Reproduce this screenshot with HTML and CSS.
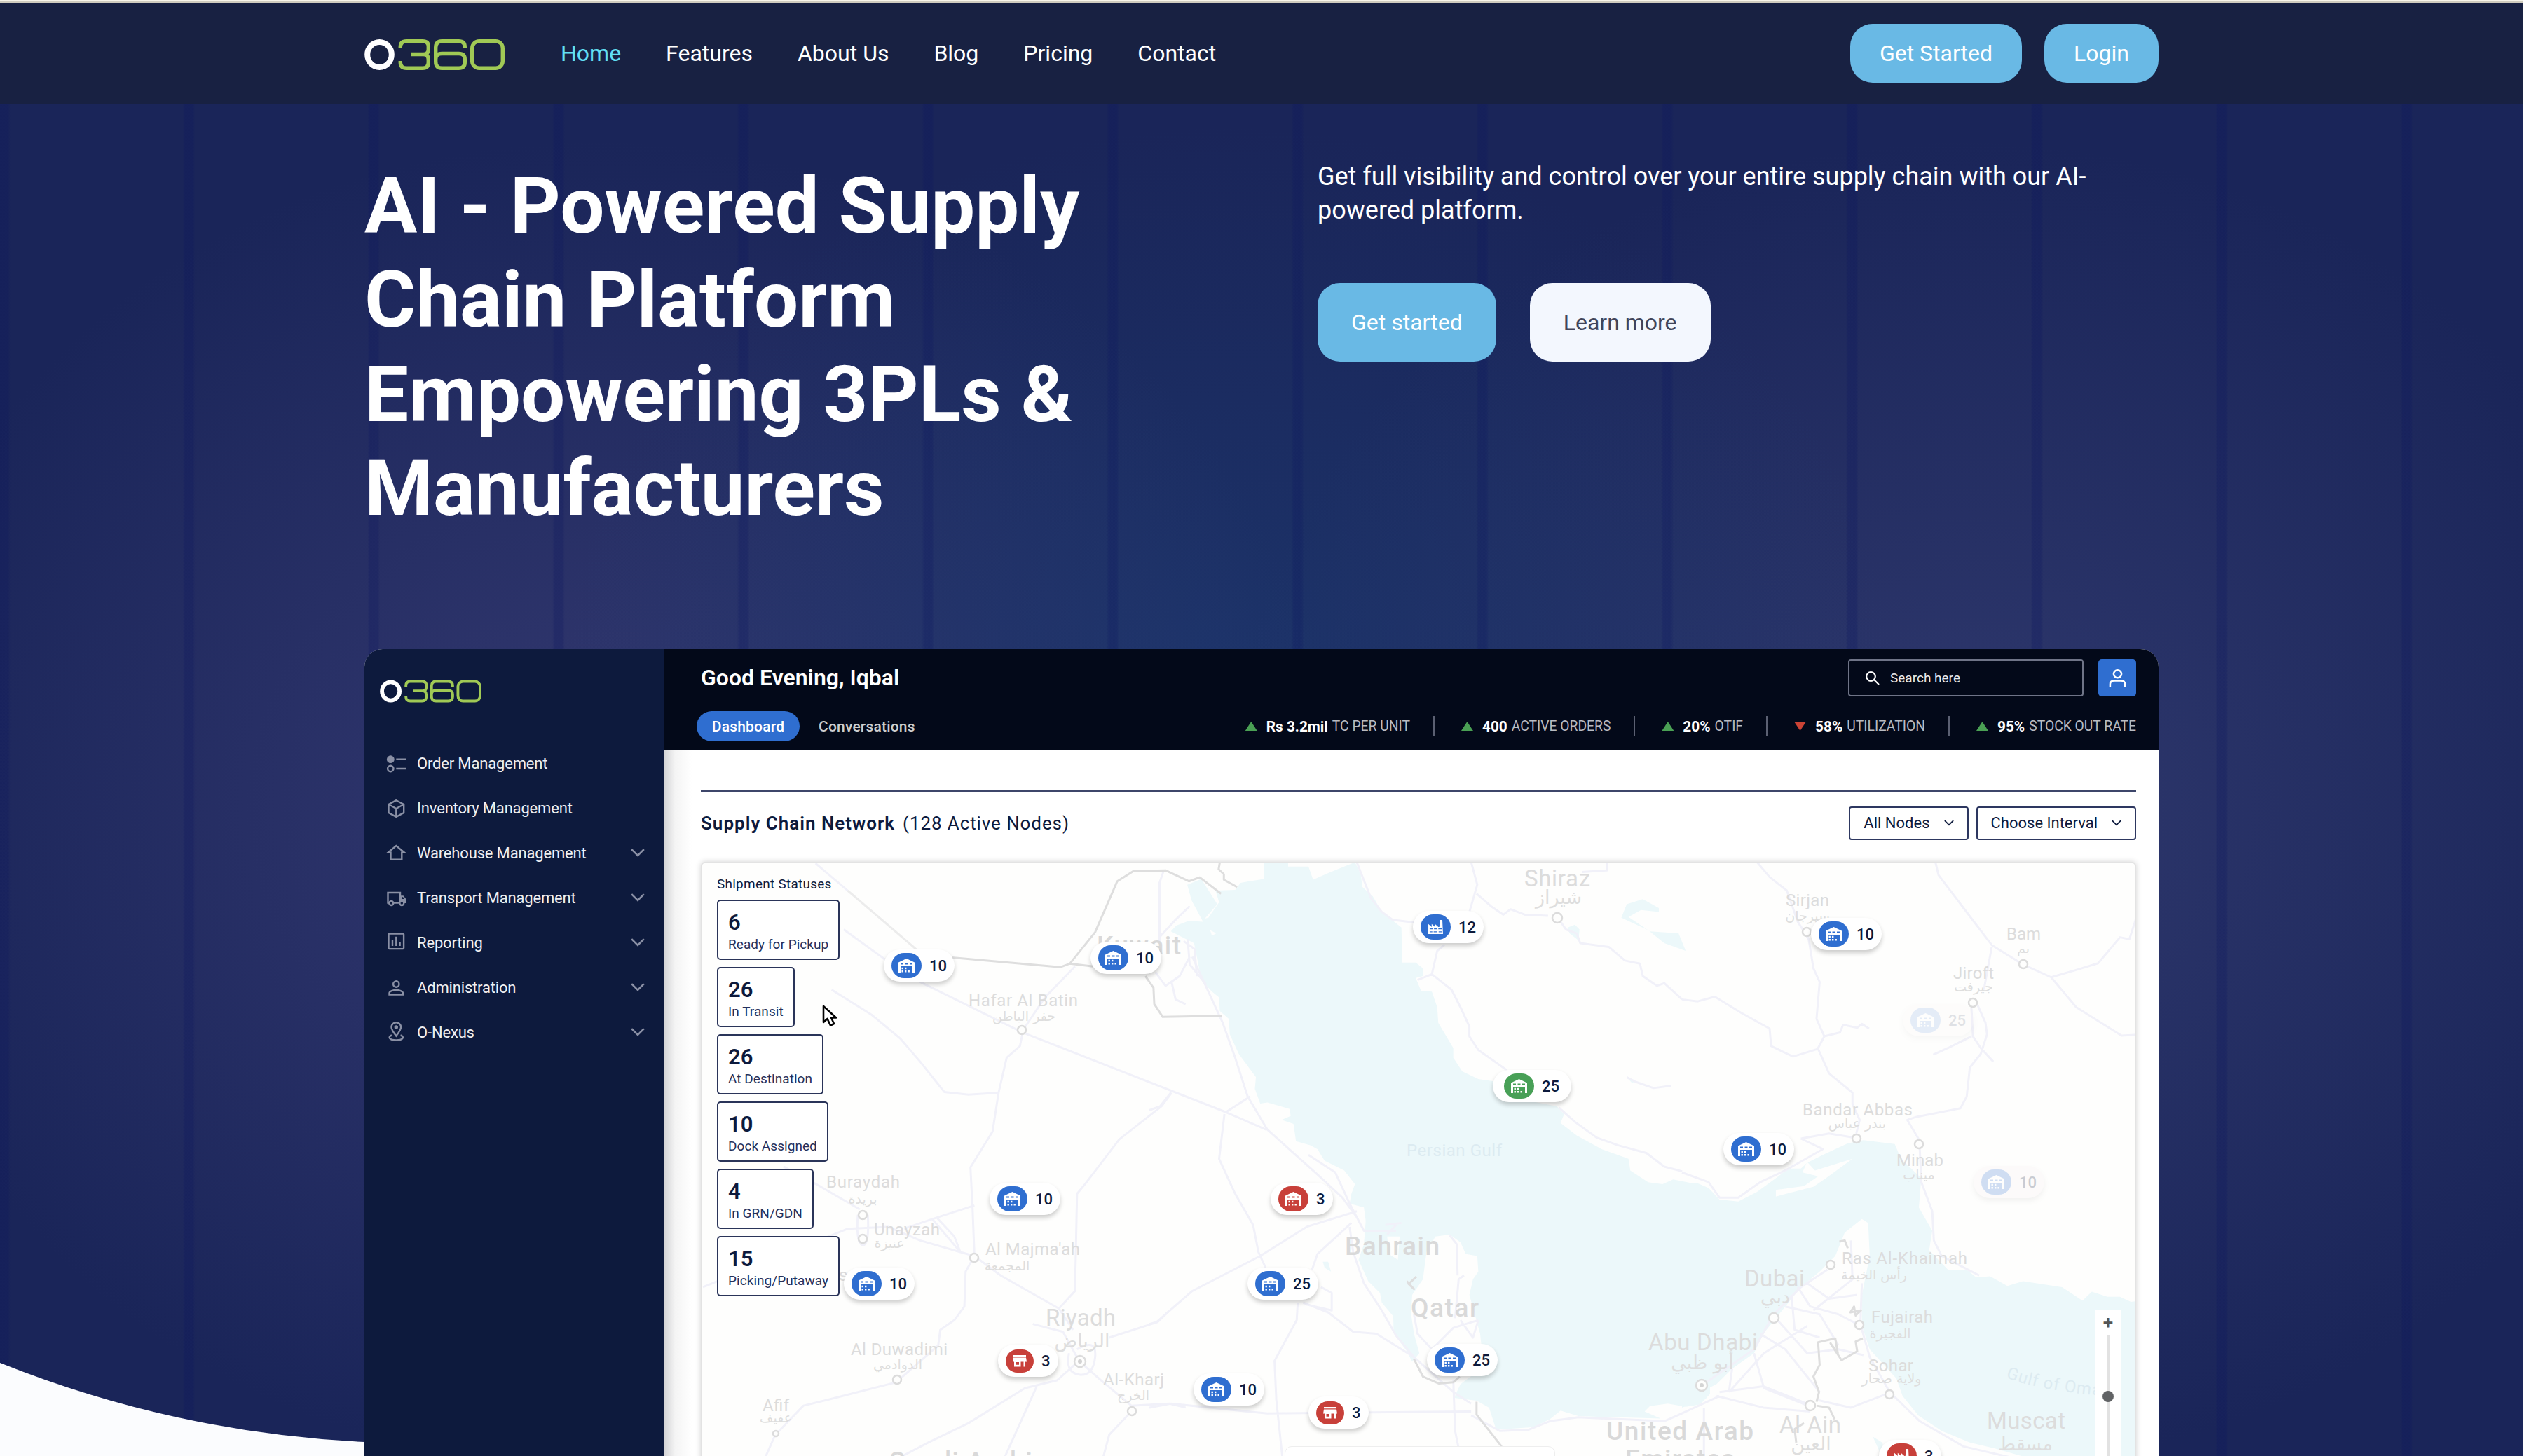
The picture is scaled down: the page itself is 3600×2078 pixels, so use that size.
FILE: index.html
```html
<!DOCTYPE html>
<html lang="en">
<head>
<meta charset="utf-8">
<title>O360 - Supply Chain Platform</title>
<link rel="stylesheet" href="styles.css">
</head>
<body>
<svg class="defs" aria-hidden="true">
  <symbol id="logo" viewBox="0 0 200 44">
    <ellipse cx="21.5" cy="22" rx="17.3" ry="18" fill="none" stroke="#fff" stroke-width="8"/>
    <g fill="none" stroke="#a0c955" stroke-width="5.4">
      <path d="M51.3 13V11Q51.3 2.7 60 2.7H83Q91.3 2.7 91.3 10V14.500Q91.3 21.500 84 21.500H66M84 21.500Q91.3 21.500 91.3 29V33Q91.3 41.300 83 41.300H60Q51.3 41.300 51.3 33V31"/>
      <path d="M143.300 13V11Q143.300 2.700 134.500 2.700H110.500Q101.700 2.700 101.700 12V32Q101.700 41.300 110.500 41.300H134.500Q143.300 41.300 143.300 33V28.500Q143.300 20.500 134.500 20.500H110.500Q101.700 20.500 101.700 28.500"/>
      <rect x="153.700" y="2.700" width="43.600" height="38.600" rx="10"/>
    </g>
  </symbol>
  <symbol id="warehouse" viewBox="0 0 23 20">
    <path fill="#fff" fill-rule="evenodd" d="M0 20V5.500L11.500 0 23 5.500V20H20V11H3V20ZM3 6.500V8.500H7V6.500ZM9.500 6.500V8.500H13.500V6.500ZM16 6.500V8.500H20V6.500Z"/>
    <path fill="#fff" d="M4.500 12.800h2.400v2.400h-2.400zM9 12.800h2.400v2.400h-2.400zM4.500 17h2.400v2.400h-2.400zM9 17h2.400v2.400h-2.400zM13.500 17h2.400v2.400h-2.400z"/>
  </symbol>
  <symbol id="factory" viewBox="0 0 22 21">
    <path fill="#fff" fill-rule="evenodd" d="M0 21V6L5 10.500V6L10 10.500V6L15 10.500H16.500L17.500 0H21L22 21ZM2 12.500V14H6.500V12.500ZM8.500 12.500V14H13V12.500ZM15 12.500V14H20V12.500ZM2 17V18.500H6V17ZM8 17V18.500H13.500V17ZM15.500 17V18.500H20V17Z"/>
  </symbol>
  <symbol id="store" viewBox="0 0 20 17">
    <path fill="#fff" fill-rule="evenodd" d="M1 0H19V2.200H1ZM1 3.500H19L20 9.500H18V16.500H15.500V9.500H11.500V16.500H2V9.500H0ZM4.500 10V13.800H9V10Z"/>
  </symbol>
  <symbol id="chev" viewBox="0 0 20 12"><path d="M1.200 1.200 10 10 18.800 1.200" fill="none" stroke="currentColor" stroke-width="2.600"/></symbol>
</svg>

<div class="page">
  <svg class="backdrop" viewBox="0 0 3600 2078" aria-hidden="true">
    <path d="M0 1862.500H3600" stroke="#fff" stroke-opacity=".16"/>
    <path d="M0 1945Q250 2045 520 2058V2078H0Z" fill="#fbfcfe"/>
  </svg>

  <header class="topbar">
    <div class="wrap topbar-in">
      <svg class="logo" role="img" aria-label="O360"><use href="#logo"/></svg>
      <nav class="nav">
        <a class="on">Home</a><a>Features</a><a>About Us</a><a>Blog</a><a>Pricing</a><a>Contact</a>
      </nav>
      <div class="topbtns"><a class="btn">Get Started</a><a class="btn">Login</a></div>
    </div>
  </header>

  <section class="wrap hero">
    <h1>AI - Powered Supply Chain Platform Empowering 3PLs &amp; Manufacturers</h1>
    <div class="lead">
      <p>Get full visibility and control over your entire supply chain with our AI-powered platform.</p>
      <div class="cta"><a class="btn big">Get started</a><a class="btn big light">Learn more</a></div>
    </div>
  </section>

  <section class="wrap app">
    <aside class="side">
      <svg class="side-logo" role="img" aria-label="O360"><use href="#logo"/></svg>
      <ul class="menu">
        <li><svg class="mi" viewBox="0 0 32 32"><circle cx="8.300" cy="10.700" r="5.400" fill="currentColor" stroke="none"/><circle cx="8.300" cy="24" r="4.200"/><path d="M16.300 10.700H30M16.300 24H30"/></svg><span>Order Management</span></li>
        <li><svg class="mi" viewBox="0 0 32 32"><path d="M16.300 5.200 27.200 11V23L16.300 28.800 5.500 23V11ZM5.500 11 16.300 17 27.200 11M16.300 17V28.800"/></svg><span>Inventory Management</span></li>
        <li><svg class="mi" viewBox="0 0 32 32"><path d="M8.500 25.800V15.500H4.800L16.300 6 28 15.500H24.300V25.800Z"/></svg><span>Warehouse Management</span><svg class="chev"><use href="#chev"/></svg></li>
        <li><svg class="mi" viewBox="0 0 32 32"><path d="M6 23.500H4.500V9H22V23.500H12.500"/><path d="M22 13.300H26.500L30.700 18.500V24H22Z" fill="currentColor" stroke="none"/><path d="M24 15.300H26L28 18H24Z" fill="#0d1a3d" stroke="none"/><circle cx="9.300" cy="24" r="3" fill="#0d1a3d"/><circle cx="24.300" cy="24" r="3" fill="#0d1a3d"/></svg><span>Transport Management</span><svg class="chev"><use href="#chev"/></svg></li>
        <li><svg class="mi" viewBox="0 0 32 32"><rect x="5.500" y="3.500" width="21.600" height="21.600" rx="1"/><path d="M11 12V21M16.300 7.700V21M21.600 16V21"/></svg><span>Reporting</span><svg class="chev"><use href="#chev"/></svg></li>
        <li><svg class="mi" viewBox="0 0 32 32"><circle cx="16.300" cy="11.500" r="4.200"/><path d="M6.500 26.500V24.500C6.500 21.500 12 20 16.300 20S26 21.500 26 24.500V26.500Z"/></svg><span>Administration</span><svg class="chev"><use href="#chev"/></svg></li>
        <li><svg class="mi" viewBox="0 0 32 32"><path d="M16.300 21.500C12 16 9.500 12.500 9.500 9A6.800 6.800 0 0 1 23.100 9C23.100 12.500 20.600 16 16.300 21.500Z"/><circle cx="16.300" cy="9" r="2.700" fill="currentColor" stroke="none"/><path d="M10 20.500C4 22.500 6 27.500 16.300 27.500S28.500 22.500 22.500 20.500"/></svg><span>O-Nexus</span><svg class="chev"><use href="#chev"/></svg></li>
      </ul>
    </aside>

    <div class="main">
      <div class="bar">
        <div class="bar-row">
          <div class="greet">Good Evening, Iqbal</div>
          <div class="search"><svg viewBox="0 0 22 22"><circle cx="8.500" cy="8.500" r="6.300"/><path d="M13 13 20 20"/></svg>Search here</div>
          <div class="avatar"><svg viewBox="0 0 28 28"><circle cx="14" cy="7.500" r="5.800"/><path d="M3 27V23Q3 17.500 9 17.500H19Q25 17.500 25 23V27"/></svg></div>
        </div>
        <div class="bar-row two">
          <div class="tabs"><span class="tab on">Dashboard</span><span class="tab">Conversations</span></div>
          <div class="kpis">
            <div class="kpi"><i class="tri"></i><b>Rs 3.2mil</b><span>TC PER UNIT</span></div>
            <div class="kpi"><i class="tri"></i><b>400</b><span>ACTIVE ORDERS</span></div>
            <div class="kpi"><i class="tri"></i><b>20%</b><span>OTIF</span></div>
            <div class="kpi"><i class="tri down"></i><b>58%</b><span>UTILIZATION</span></div>
            <div class="kpi"><i class="tri"></i><b>95%</b><span>STOCK OUT RATE</span></div>
          </div>
        </div>
      </div>

      <div class="body">
        <div class="titlebar">
          <div class="title"><b>Supply Chain Network</b><span>(128 Active Nodes)</span></div>
          <div class="selects">
            <div class="select">All Nodes<svg class="sc"><use href="#chev"/></svg></div>
            <div class="select">Choose Interval<svg class="sc"><use href="#chev"/></svg></div>
          </div>
        </div>

        <div class="map">
          <svg class="geo" viewBox="0 0 2047 900">
            <g class="water">
              <path transform="translate(639 -21) scale(.5102 .5548)" d="M320 37H388V48H445L458 82 500 65 575 37 592 70 595 100 625 125 650 165 705 205 707 295H745L765 310V330L745 335 760 368 790 370 805 410 808 450 850 515V540L875 575 920 595 960 600 1000 640 1140 665 1160 685 1150 708 1195 740 1265 775 1340 800 1345 830 1395 860 1435 865 1465 853 1545 868 1568 885V1405L1540 1432 1500 1438 1450 1430 1400 1436 1385 1450 1430 1468 1200 1462 1150 1448 1120 1470 1075 1490 970 1497 950 1440 915 1422 852 1415 870 1380 935 1335 925 1250 895 1150 905 1110 920 1090 917 1050 885 1045 870 1015 840 995 800 1000 775 1040 765 1110 735 1150 732 1200 740 1250 755 1300 735 1322 720 1295 700 1270 683 1240 682 1205 650 1170 645 1145 612 1115 585 1060 600 1020 605 960 600 925 560 915 565 890 575 865 545 830 490 805 470 775 450 765 410 755 403 710 370 700 395 690 393 672 330 655 310 658 295 620 298 590 250 530 225 480 222 440 197 420 195 385 175 370 145 340 135 290 125 245 60 215 75 200 110 188 150 190 118 135 106 95 145 80 190 145 155 182 165 180 195 140 185 110 240 108 255 90 320 80Z"/>
              <path transform="translate(639 -21) scale(.5102 .5548)" d="M1320 180 1335 145 1380 132 1425 155 1425 165 1375 160 1340 178 1400 215 1480 220 1500 265 1440 245 1395 212ZM1170 205 1190 198 1203 210 1200 238 1175 220ZM485 1065 500 1065 508 1090 490 1080ZM1335 590 1360 600 1350 605Z"/>
              <path transform="translate(1399 -21) scale(.4464 .5548)" d="M0 863 50 863 85 875 120 905 180 910 240 885 300 850 340 825 380 825 400 810 450 790 530 760 580 752 680 762 700 800 765 850 757 925 800 985 790 1035 850 1085 910 1085 940 1105 985 1102 1040 1127 1090 1115 1215 1130 1280 1165 1310 1142 1360 1155 1400 1155 1435 1168 1452 1166V1640H1100V1568L1000 1545 920 1530 830 1500 755 1460 705 1410 685 1365 600 1290 575 1230 575 1150 600 1050 595 965 575 955 520 990 490 1050 440 1090 380 1130 330 1180 260 1250 230 1300 160 1340 110 1380 60 1400 80 1415 0 1440ZM610 1515 640 1530 655 1568H640Z"/>
            </g>
            <g class="land">
              <path transform="translate(639 -21) scale(.5102 .5548)" d="M665 1000H700L695 1060 670 1045ZM170 212 187 220 175 226Z"/>
              <path transform="translate(1399 -21) scale(.4464 .5548)" d="M300 880 390 870 435 845 385 835 400 808 425 830 545 800 460 850 420 872 300 897Z"/>
            </g>
            <g class="roads">
              <path transform="translate(-21 -21) scale(.574 .5548)" d="M320 40 400 110M390 210 550 330M570 340 835 475 1340 680 1440 725M835 475 828 510 795 540 775 630 760 730 705 822 710 920 715 1050 693 1090 690 1180 665 1215 630 1240 625 1280 520 1375 350 1420 290 1435 220 1510 195 1568M360 365 460 430 530 490 580 550 640 628 700 635 775 630M1400 640 1340 680M1205 630 1180 665 1075 750 990 865 970 890 965 1140 925 1185M240 820 330 870 430 930M425 944Q420 1020 437 1022T450 944M610 955 680 1040 715 1050 780 1100 925 1185 960 1240M40 1130 400 980 500 975 580 1010 680 1040M540 980 610 955 715 920M620 950 665 1000 680 1040M860 1225 935 1245 975 1320 1030 1370 1105 1435 1200 1430 1240 1440M1050 1260 1170 1220 1200 1190M975 1320 920 1370 840 1390 700 1480 600 1530 530 1568M870 1385 790 1568M1105 1450 1050 1510 1035 1568M965 305 890 385 835 470M1185 60 1175 90 1175 240M1250 150 1215 185 1175 230M1165 320 1190 355 1225 330 1250 280M1205 345 1215 390 1240 402M1235 240 1262 260 1268 330M1245 235 1250 300 1290 350M950 1300Q940 1350 975 1355T1015 1310 970 1290"/>
              <path transform="translate(639 -21) scale(.5102 .5548)" d="M120 280 140 320 180 400 205 450 240 540 275 640 330 725 470 840 540 900 580 950M60 630 30 665 0 675M580 37 620 130 650 165 680 185 740 192M900 37 917 95 895 165M915 118 955 150 990 172 1010 158 1050 172 1115 175M1150 190 1165 210 1195 220 1205 245 1285 255 1330 290 1372 298 1380 330 1420 355 1440 348 1490 390M825 250 805 265 790 325 750 340M790 325 845 365 870 410 895 460V485L920 520 1000 572M1145 668 1190 705 1250 745 1310 765 1390 785 1440 820 1490 832M1210 62 1280 58V37M1335 590 1360 602 1410 618 1460 612M560 975 570 1040 600 1120 650 1190 690 1255 740 1310 850 1400 900 1430M445 790 520 835 560 915 600 985 690 985M565 965 470 1045 455 1085M580 935 440 975 310 1050 120 1140 20 1220 0 1225M210 685 195 800 240 890 290 970 305 1040 325 1080M480 1130 510 1145V1190L440 1175M415 1170 412 1215 350 1320 355 1420 372 1568M430 1170 500 1195 570 1245 635 1250 740 1310M0 1440 60 1430 330 1455 900 1450M850 1370 855 1500 865 1545M740 1200 750 1250 790 1290 850 1235 920 1215M855 1210 865 1110 880 1100M840 997 860 1020 862 1100M870 1215 905 1260 920 1215M660 970 705 965M665 995 690 970M900 1460 980 1500 1060 1497 1120 1475 1200 1465 1440 1475 1490 1455"/>
              <path transform="translate(1399 -21) scale(.4464 .5548)" d="M240 37 280 75 335 110 370 190 405 235 420 310 440 345 430 440 455 485 435 515M455 485 505 475 515 455 560 463 575 453 598 465M0 390 50 395 105 383 190 425 280 465 285 510 355 537 435 517 470 580 545 630V660L568 700 557 735M810 37 820 70 900 155 990 250 1090 300 1180 333 1265 313 1330 297 1400 230 1430 235 1452 180M1180 333 1260 410 1405 483 1452 481M990 255 965 365M925 410 930 485 955 515 995 550M945 405 970 450 975 480 955 530 920 565 910 640 890 670 750 692 720 700 757 750M760 775 765 860 800 935 805 1010 830 1050 950 1100M925 485 850 515 803 532M380 748 470 735 545 745M380 748 450 775 330 830 250 860 180 900 120 900 85 860 0 835M465 1085 380 1130 293 1200 230 1290 63 1383M370 1130 410 1180 500 1200 560 1225M305 1215 400 1300 500 1290 580 1305M575 1120 570 1225 600 1310 664 1400 760 1475 900 1540 1050 1568M250 1250 330 1290 440 1400M230 1300 262 1390 400 1434M150 1400 262 1300 400 1230M330 1180 440 1200 500 1280M350 1150 360 1240 440 1260M110 1410 260 1440 410 1450M430 1420 540 1440 650 1406M120 1400 260 1385 400 1430M160 1340 150 1400M540 1010 545 1110 420 1190M400 1120 470 1160 560 1150M70 1440V1568M0 1455 120 1410"/>
            </g>
            <g class="borders">
              <path class="faint" transform="translate(-21 -21) scale(.574 .5548)" d="M400 110 575 265"/>
              <path transform="translate(-21 -21) scale(.574 .5548)" d="M659 282 928 307 952 298 1015 217 1070 86 1110 60 1190 58 1248 86 1275 76 1328 118M1325 37 1322 55 1335 68V82L1368 101M952 298 1010 305M1140 330 1160 360 1162 402 1183 435 1330 432"/>
              <path transform="translate(639 -21) scale(.5102 .5548)" d="M740 1315 765 1360 810 1378 850 1375 868 1360M915 1425V1458L985 1540M720 1115 740 1135 725 1122 747 1103"/>
              <path transform="translate(1399 -21) scale(.4464 .5548)" d="M503 1013 520 1010 530 1030M578 1262 555 1270 560 1295 510 1318 475 1275 498 1300 490 1262 435 1272 440 1330 420 1360 438 1400 430 1425M390 1480 360 1495 365 1530M430 1435 470 1440 488 1470M538 1195 572 1190 555 1203 550 1180Z"/>
            </g>
            <g class="towns">
              <circle cx="457" cy="239" r="6"/><circle cx="230" cy="503" r="6"/><circle cx="230" cy="537" r="6"/><circle cx="389" cy="564" r="6"/><circle cx="279" cy="738" r="6"/><circle cx="614" cy="783" r="6"/><circle cx="106" cy="815" r="4"/><circle cx="1221" cy="79" r="7"/><circle cx="1577" cy="99" r="6"/><circle cx="1886" cy="145" r="6"/><circle cx="1814" cy="200" r="6"/><circle cx="1648" cy="394" r="6"/><circle cx="1737" cy="402" r="6"/><circle cx="1611" cy="574" r="6"/><circle cx="1530" cy="650" r="7"/><circle cx="1652" cy="660" r="6"/><circle cx="1695" cy="759" r="6"/><circle cx="1582" cy="775" r="7"/>
              <circle cx="540" cy="712" r="8"/><circle cx="540" cy="712" r="3" class="dot"/><circle cx="1427" cy="746" r="8"/><circle cx="1427" cy="746" r="3" class="dot"/>
            </g>
            <g class="lbl">
              <text x="381" y="205" textLength="156">Hafar Al Batin</text>
              <text x="178" y="464" textLength="105">Buraydah</text>
              <text x="246" y="532" textLength="94">Unayzah</text>
              <text x="405" y="560" textLength="135">Al Majma'ah</text>
              <text x="213" y="703" textLength="138">Al Duwadimi</text>
              <text x="573" y="746" textLength="87">Al-Kharj</text>
              <text x="87" y="783" textLength="38">Afif</text>
              <text x="196" y="597">s</text>
              <text x="1547" y="62" textLength="62">Sirjan</text>
              <text x="1862" y="110" textLength="49">Bam</text>
              <text x="1786" y="166" textLength="58">Jiroft</text>
              <text x="1571" y="361" textLength="157">Bandar Abbas</text>
              <text x="1705" y="433" textLength="67">Minab</text>
              <text x="1627" y="573" textLength="179">Ras Al-Khaimah</text>
              <text x="1669" y="657" textLength="88">Fujairah</text>
              <text x="1665" y="726" textLength="64">Sohar</text>
            </g>
            <g class="lbl city">
              <text x="491" y="661" textLength="100">Riyadh</text>
              <text x="1174" y="34" textLength="94">Shiraz</text>
              <text x="1351" y="696" textLength="156">Abu Dhabi</text>
              <text x="1488" y="605" textLength="86">Dubai</text>
              <text x="1538" y="814" textLength="88">Al Ain</text>
              <text x="1834" y="808" textLength="112">Muscat</text>
            </g>
            <g class="lbl country">
              <text x="564" y="131" textLength="120">Kuwait</text>
              <text x="268" y="867" textLength="225">Saudi Arabia</text>
              <text x="918" y="560" textLength="135">Bahrain</text>
              <text x="1012" y="648" textLength="97">Qatar</text>
              <text x="1291" y="824" textLength="210">United Arab</text>
              <text x="1318" y="864" textLength="156">Emirates</text>
            </g>
            <g class="lbl sea">
              <text x="1006" y="419" textLength="137">Persian Gulf</text>
              <path id="oman" d="M1861 735Q1920 758 2047 764" fill="none"/>
              <text><textPath href="#oman">Gulf of Oman</textPath></text>
            </g>
            <g class="ar">
              <text x="460" y="226">حفر الباطن</text><text x="230" y="487">بريدة</text><text x="268" y="550">عنيزة</text><text x="436" y="582">المجمعة</text><text x="280" y="723">الدوادمي</text><text x="616" y="767">الخرج</text><text x="106" y="799">عفيف</text><text x="1578" y="83">سيرجان</text><text x="1886" y="129">بم</text><text x="1815" y="184">جيرفت</text><text x="1649" y="379">بندر عباس</text><text x="1737" y="452">ميناب</text><text x="1673" y="595">رأس الخيمة</text><text x="1696" y="679">الفجيرة</text><text x="1698" y="743">ولاية صحار</text>
            </g>
            <g class="ar large">
              <text x="543" y="692">الرياض</text><text x="1223" y="59">شيراز</text><text x="1532" y="629">دبي</text><text x="1583" y="839">العين</text><text x="1889" y="839">مسقط</text><text x="1428" y="723">أبو ظبي</text>
            </g>
          </svg>

          <div class="pin" style="--x:292px;--y:148px"><i><svg><use href="#warehouse"/></svg></i>10</div>
          <div class="pin" style="--x:587px;--y:137px"><i><svg><use href="#warehouse"/></svg></i>10</div>
          <div class="pin" style="--x:1047px;--y:93px"><i><svg><use href="#factory"/></svg></i>12</div>
          <div class="pin wide green" style="--x:1166px;--y:320px"><i><svg><use href="#warehouse"/></svg></i>25</div>
          <div class="pin" style="--x:1615px;--y:103px"><i><svg><use href="#warehouse"/></svg></i>10</div>
          <div class="pin dim" style="--x:1746px;--y:226px"><i><svg><use href="#warehouse"/></svg></i>25</div>
          <div class="pin" style="--x:1490px;--y:410px"><i><svg><use href="#warehouse"/></svg></i>10</div>
          <div class="pin dim more" style="--x:1847px;--y:457px"><i><svg><use href="#warehouse"/></svg></i>10</div>
          <div class="pin" style="--x:443px;--y:481px"><i><svg><use href="#warehouse"/></svg></i>10</div>
          <div class="pin red" style="--x:844px;--y:481px"><i><svg><use href="#warehouse"/></svg></i>3</div>
          <div class="pin" style="--x:811px;--y:602px"><i><svg><use href="#warehouse"/></svg></i>25</div>
          <div class="pin" style="--x:235px;--y:602px"><i><svg><use href="#warehouse"/></svg></i>10</div>
          <div class="pin red small" style="--x:453px;--y:712px"><i><svg><use href="#store"/></svg></i>3</div>
          <div class="pin" style="--x:734px;--y:753px"><i><svg><use href="#warehouse"/></svg></i>10</div>
          <div class="pin red small" style="--x:896px;--y:786px"><i><svg><use href="#store"/></svg></i>3</div>
          <div class="pin" style="--x:1067px;--y:711px"><i><svg><use href="#warehouse"/></svg></i>25</div>
          <div class="pin red" style="--x:1712px;--y:848px"><i><svg><use href="#factory"/></svg></i>3</div>

          <div class="dock"></div>
          <div class="zoomer"><span>+</span><div class="track"></div></div>

          <div class="statuses">
            <div class="st-title">Shipment Statuses</div>
            <div class="st"><b>6</b><span>Ready for Pickup</span></div>
            <div class="st"><b>26</b><span>In Transit</span></div>
            <div class="st"><b>26</b><span>At Destination</span></div>
            <div class="st"><b>10</b><span>Dock Assigned</span></div>
            <div class="st"><b>4</b><span>In GRN/GDN</span></div>
            <div class="st"><b>15</b><span>Picking/Putaway</span></div>
          </div>
          <svg class="cursor" viewBox="0 0 22 32"><path d="M2 2V25L7.500 20 12 29.500 17 27 13 18.500H20Z" fill="#fff" stroke="#000" stroke-width="2.600" stroke-linejoin="round"/></svg>
        </div>
      </div>
    </div>
  </section>
</div>
</body>
</html>
```
FILE: styles.css
```css
* { box-sizing: border-box; }
body { margin: 0; height: 2078px; overflow: hidden; font-family: Roboto, "Liberation Sans", sans-serif; color: #fff; }
.defs { position: absolute; width: 0; height: 0; }

.page {
  position: relative;
  height: 2078px;
  overflow: hidden;
  background:
    repeating-linear-gradient(90deg, rgba(10, 20, 95, .26) 0 11px, transparent 15px 260.700px, rgba(10, 20, 95, .26) 263.700px),
    radial-gradient(ellipse 950px 800px at 1750px 980px, rgba(30, 66, 122, .5), transparent),
    radial-gradient(ellipse 1050px 950px at 850px 1150px, rgba(66, 68, 126, .62), transparent),
    radial-gradient(ellipse 1050px 950px at 2800px 1150px, rgba(64, 72, 126, .56), transparent),
    #1a2559;
}
.backdrop { position: absolute; inset: 0; width: 3600px; height: 2078px; }
.wrap { width: 2560px; margin: 0 auto; position: relative; }

.topbar {
  position: relative;
  height: 148px;
  background: linear-gradient(#f8f5e9 2px, #cfccbf 2px 4px, #182142 4px);
  padding-top: 4px;
}
.topbar-in { display: flex; align-items: center; height: 144px; }
.logo { width: 200px; height: 44px; position: relative; top: 2px; }
.nav { display: flex; gap: 64px; margin-left: 80px; font-size: 32px; }
.nav .on { color: #62dff3; }
.topbtns { display: flex; gap: 32px; margin-left: auto; }
.btn {
  display: flex; align-items: center; height: 84px; padding: 0 42px;
  border-radius: 32px; background: #69b9e5; color: #fff; font-size: 32px;
}

.hero { display: grid; grid-template-columns: 1fr 1fr; gap: 160px; padding-top: 79px; height: 778px; align-items: start; }
h1 { margin: 0; font-size: 112px; line-height: 1.2; font-weight: 700; }
.lead p { margin: 0; padding-top: 1px; font-size: 36px; line-height: 48px; }
.cta { display: flex; gap: 48px; margin-top: 80px; }
.btn.big { height: 112px; padding: 0 48px; }
.btn.light { background: #f3f7fe; color: #41455a; }

.app { display: flex; height: 1152px; border-radius: 26px 26px 0 0; overflow: hidden; background: #fff; }
.side { flex: none; width: 427px; background: #0d1a3d; padding-top: 44px; }
.side-logo { display: block; width: 145px; height: 33px; margin-left: 22px; }
.menu { list-style: none; margin: 54px 0 0; padding: 0 27px 0 29px; }
.menu li { display: flex; align-items: center; height: 64px; gap: 14px; font-size: 22px; letter-spacing: -.17px; color: #eff0f2; }
.mi { width: 32px; height: 32px; color: #8a90a5; fill: none; stroke: currentColor; stroke-width: 2.400; }
.chev { width: 20px; height: 12px; margin-left: auto; color: #8a90a5; }

.main { flex: 1; display: flex; flex-direction: column; }
.bar { flex: none; height: 144px; background: #030919; padding: 15px 32px 0 53px; }
.bar-row { display: flex; align-items: center; height: 53px; }
.greet { font-size: 32px; font-weight: 600; position: relative; top: -1px; }
.search {
  display: flex; align-items: center; gap: 14px; width: 336px; height: 53px; margin-left: auto;
  padding-left: 22px; border: 2px solid #6f7487; border-radius: 4px; font-size: 19px; color: #e8e9ec;
}
.search svg { width: 22px; height: 22px; fill: none; stroke: #fff; stroke-width: 2.200; }
.avatar { display: flex; align-items: center; justify-content: center; width: 54px; height: 53px; margin-left: 21px; border-radius: 5px; background: #2f6ed0; }
.avatar svg { width: 27px; height: 28px; fill: none; stroke: #fff; stroke-width: 2.600; }
.bar-row.two { height: 43px; margin-top: 21px; justify-content: space-between; }
.tabs { display: flex; align-items: center; margin-left: -6px; font-size: 21px; font-weight: 500; }
.tab { color: #cdcecf; letter-spacing: .2px; }
.tab.on { display: flex; align-items: center; justify-content: center; width: 147px; height: 43px; border-radius: 22px; background: #2f6ed0; color: #fff; margin-right: 27px; }
.kpis { display: flex; align-items: center; }
.kpi { display: flex; align-items: center; font-size: 19.300px; color: #b9bbc1; }
.kpi b { color: #fff; font-size: 20.800px; font-weight: 700; margin: 0 6px 0 13px; }
.kpi + .kpi::before { content: ""; width: 2px; height: 29px; background: #5b6072; margin: 0 38px 0 33px; }
.tri { width: 17px; height: 13px; background: #4aa054; clip-path: polygon(50% 0, 100% 100%, 0 100%); }
.tri.down { background: #cb4335; clip-path: polygon(0 0, 100% 0, 50% 100%); }

.body { flex: 1; min-height: 0; padding: 58px 32px 0 53px; color: #0d1a3d; background: linear-gradient(90deg, #d2d2d4, #f4f4f4 16px, #fff 40px); }
.titlebar { display: flex; align-items: center; justify-content: space-between; height: 71px; padding-top: 20px; border-top: 2px solid #3d466a; }
.title { display: flex; gap: 11px; font-size: 26px; letter-spacing: .9px; }
.title b { font-weight: 600; letter-spacing: 1px; }
.selects { display: flex; gap: 11px; }
.select { display: flex; align-items: center; gap: 20px; height: 48px; padding: 0 19px; border: 2px solid #2d3760; border-radius: 4px; font-size: 22px; }
.sc { width: 14px; height: 9px; }

.map { position: relative; height: 900px; margin-top: 31px; border: 2px solid #e3e3e3; border-radius: 6px; background: #fefefd; overflow: hidden; box-shadow: 0 0 8px rgba(0, 0, 0, .18); }
.geo { position: absolute; left: -1px; top: -1px; width: 2047px; height: 900px; }
.water { fill: #ecf8fa; }
.land { fill: #fefefd; }
.roads path, .borders path { fill: none; stroke: #f1f1f9; stroke-width: 3px; vector-effect: non-scaling-stroke; stroke-linejoin: round; }
.borders path { stroke: #dedede; }
.borders .faint { stroke: #ececec; }
.towns circle { fill: #fefefd; stroke: #dcdcdc; stroke-width: 2.500px; }
.towns .dot { fill: #d4d4d4; stroke: none; }
.lbl { font-size: 24px; fill: #dcdcdc; }
.city { font-size: 33px; }
.country { font-size: 37px; font-weight: 500; fill: #d9d9d9; }
.sea { font-size: 24px; letter-spacing: 1px; fill: #dcebf1; }
.ar { font-family: "DejaVu Sans", sans-serif; font-size: 19px; fill: #dedede; text-anchor: middle; }
.ar.large { font-size: 27px; }

.pin {
  position: absolute; left: calc(var(--x) - 33px); top: calc(var(--y) - 25px);
  display: flex; align-items: center; gap: 11px; height: 46px; padding: 0 11px; border-radius: 23px;
  background: #fff; box-shadow: 0 4px 6px rgba(0, 0, 0, .2); font-size: 22px; font-weight: 500;
}
.pin i { display: flex; align-items: center; justify-content: center; width: 43px; height: 36px; border-radius: 18px; background: #2f6ed0; }
.pin svg { width: 23px; height: 20px; }
.pin.wide { left: calc(var(--x) - 38px); padding: 0 17px 0 16px; }
.pin.green i { background: #48a057; }
.pin.red i { background: #c8403a; }
.pin.small { left: calc(var(--x) - 31px); }
.pin.small i { width: 40px; height: 33px; }
.pin.small svg { width: 20px; height: 17px; }
.dim { opacity: .12; background: #f6f0f2; }
.dim.more { opacity: .22; }

.dock { position: absolute; left: 831px; top: 832px; width: 386px; height: 60px; border: 1px solid #eee; border-radius: 10px; background: #fff; }
.zoomer { position: absolute; left: 1987px; top: 637px; width: 38px; height: 250px; background: #fff; display: flex; flex-direction: column; align-items: center; }
.zoomer span { font-size: 26px; line-height: 36px; color: #555; font-weight: 500; }
.track { width: 5px; height: 210px; background: #e2e2e2; position: relative; }
.track::after { content: ""; position: absolute; left: -6px; top: 80px; width: 16px; height: 16px; border-radius: 50%; background: #616365; }

.statuses { position: relative; display: flex; flex-direction: column; align-items: flex-start; gap: 10px; padding: 18px 0 0 21px; }
.st-title { font-size: 19px; line-height: 24px; letter-spacing: .25px; }
.st { display: flex; flex-direction: column; height: 86px; padding: 12px 14px 0; border: 2px solid #2a3459; border-radius: 5px; background: #fff; }
.st b { font-size: 31px; line-height: 38px; font-weight: 600; }
.st span { font-size: 19px; line-height: 24px; letter-spacing: .05px; color: #26305a; }
.cursor { position: absolute; left: 171px; top: 202px; width: 22px; height: 32px; }
```
